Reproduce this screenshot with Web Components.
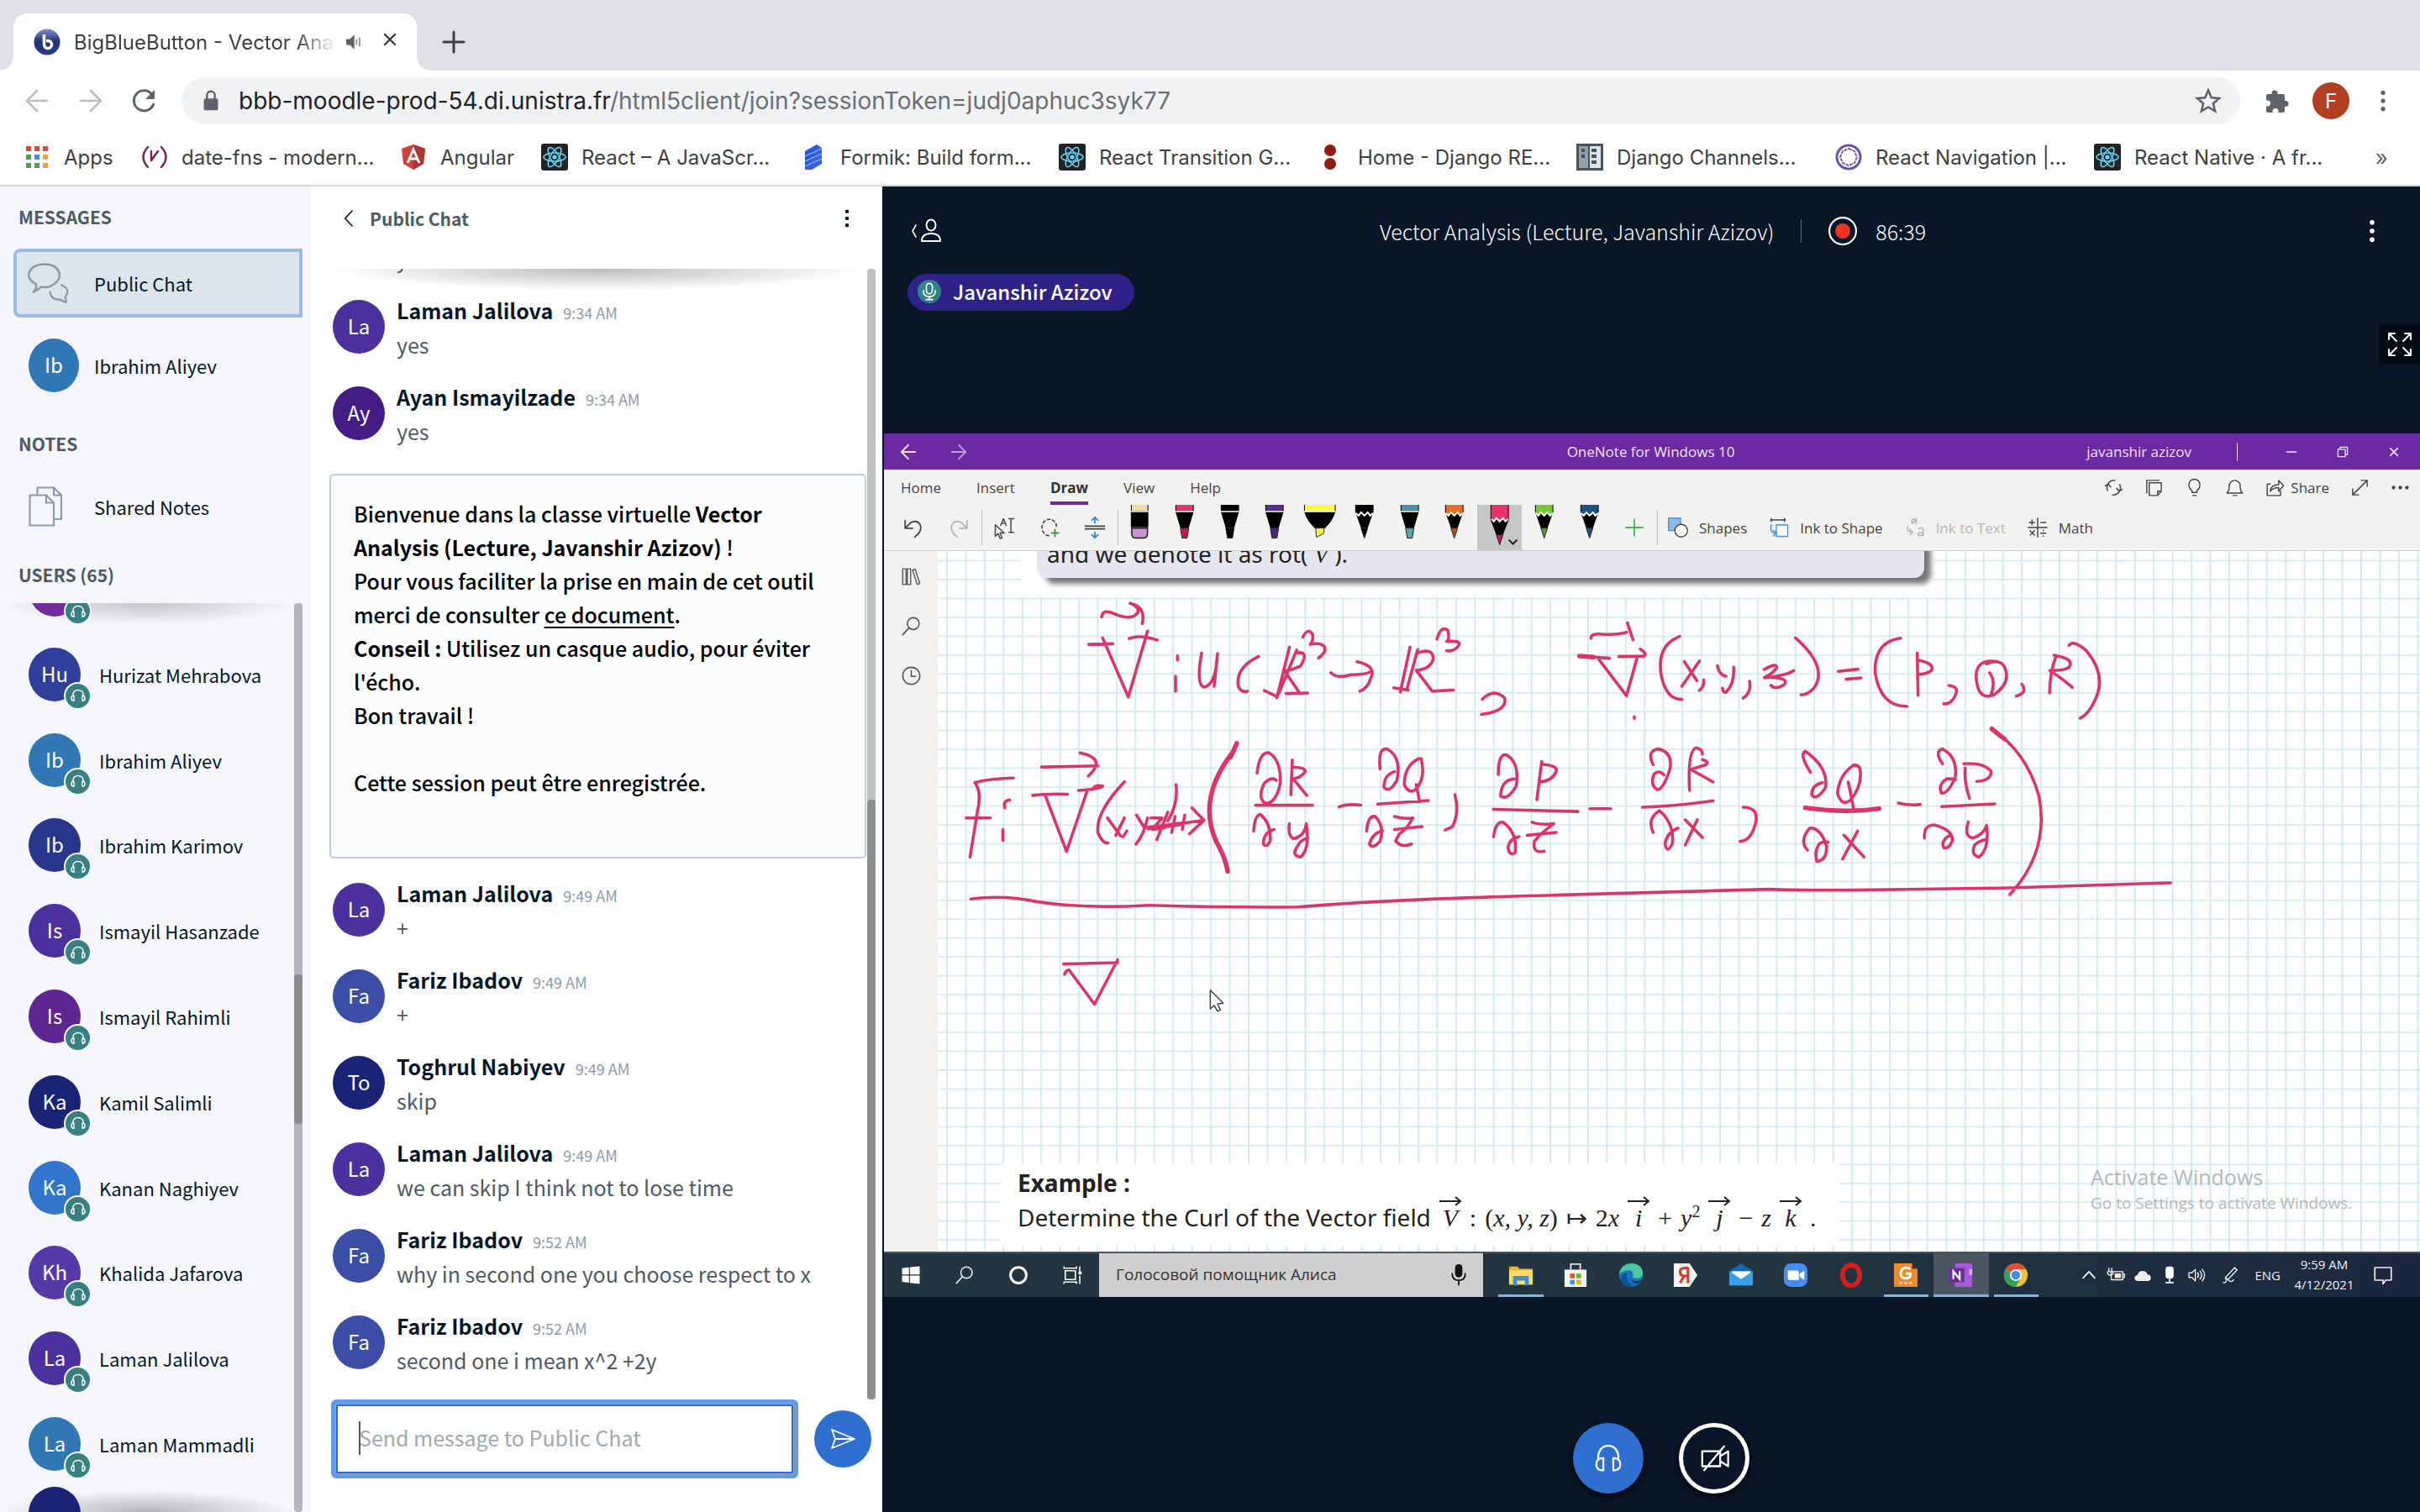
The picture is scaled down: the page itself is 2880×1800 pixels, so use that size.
<!DOCTYPE html>
<html lang="en">
<head>
<meta charset="utf-8">
<title>BigBlueButton - Vector Analysis</title>
<style>
html,body{margin:0;height:100%;overflow:hidden;background:#fff}
body{font-family:Inter,"Liberation Sans",sans-serif}
</style>
</head>
<body>
<meeting-page></meeting-page>
<script>
const define=(name,css,html)=>customElements.define(name,class extends HTMLElement{
  connectedCallback(){
    if(this.shadowRoot)return;
    const r=this.attachShadow({mode:'open'});
    const markup=typeof html==='function'?html(this):html;
    r.innerHTML='<style>*{box-sizing:border-box}button{font:inherit;color:inherit;background:none;border:0;padding:0;margin:0}a{color:inherit;text-decoration:none}'+css+'</style>'+markup;
  }
});
const S='fill="none" stroke="currentColor" stroke-linecap="round" stroke-linejoin="round"';
const react='<rect width="32" height="32" rx="3" fill="#222"/><g fill="none" stroke="#61dafb" stroke-width="1.5"><ellipse cx="16" cy="16" rx="13" ry="5"/><ellipse cx="16" cy="16" rx="13" ry="5" transform="rotate(60 16 16)"/><ellipse cx="16" cy="16" rx="13" ry="5" transform="rotate(120 16 16)"/></g><circle cx="16" cy="16" r="2.6" fill="#61dafb"/>';
const ICONS={
 bbb:'<defs><linearGradient id="g" x1="0" y1="0" x2="0" y2="1"><stop offset="0" stop-color="#7f8fc4"/><stop offset=".5" stop-color="#20307a"/><stop offset="1" stop-color="#2c3c88"/></linearGradient></defs><circle cx="16" cy="16" r="15.5" fill="url(#g)"/><path d="M12.500 7v12a4.500 4.500 0 1 0 4.500-4.500h-2" fill="none" stroke="#fff" stroke-width="3.600"/>',
 speaker:'<path d="M7 12h5l6-6v20l-6-6H7z" fill="#5f6368"/><path d="M21 12v8M25 10v12" stroke="#8a8d91" stroke-width="2"/>',
 close:`<path d="M9 9l14 14M23 9L9 23" ${S} stroke-width="2.6"/>`,
 plus:`<path d="M16 4v24M4 16h24" ${S} stroke-width="3"/>`,
 back:`<path d="M28 16H5M16 4L4 16l12 12" ${S} stroke-width="2.6"/>`,
 fwd:`<path d="M4 16h23M16 4l12 12-12 12" ${S} stroke-width="2.6"/>`,
 reload:`<path d="M27 19a12 12 0 1 1-2.500-11" fill="none" stroke="currentColor" stroke-width="3"/><path d="M28 3v11H17z" fill="currentColor"/>`,
 lock:'<rect x="7" y="13" width="18" height="15" rx="2" fill="#5f6368"/><path d="M11 14V9a5 5 0 0 1 10 0v5" fill="none" stroke="#5f6368" stroke-width="2.600"/>',
 star:'<path d="M16 3.500l3.700 8.700 9.300.8-7.100 6.200 2.200 9.200L16 23.500l-8.100 4.900 2.200-9.200L3 13l9.300-.8z" fill="none" stroke="#5f6368" stroke-width="2.600"/>',
 puzzle:'<path d="M13 3.500a3.500 3.500 0 0 1 3.500 3.500v1H23a2 2 0 0 1 2 2v6h1a3.500 3.500 0 0 1 0 7h-1v5a2 2 0 0 1-2 2h-5.500v-1.500a3.500 3.500 0 0 0-7 0V30H5a2 2 0 0 1-2-2v-5.500h1.500a3.500 3.500 0 0 0 0-7H3V10a2 2 0 0 1 2-2h4.500V7A3.500 3.500 0 0 1 13 3.500z" fill="#5f6368"/>',
 dots:'<circle cx="16" cy="5" r="3" fill="currentColor"/><circle cx="16" cy="16" r="3" fill="currentColor"/><circle cx="16" cy="27" r="3" fill="currentColor"/>',
 apps:'<g><path d="M3 3h6v6H3zM13 3h6v6h-6zM23 3h6v6h-6z" fill="#e0483e"/><path d="M3 13h6v6H3zM3 23h6v6H3zM13 23h6v6h-6z" fill="#4f9d58"/><path d="M13 13h6v6h-6z" fill="#4285f4"/><path d="M23 13h6v6h-6zM23 23h6v6h-6z" fill="#e8a33d"/></g>',
 datefns:'<path d="M8 4Q-3 16 8 28M24 4Q35 16 24 28M12 9v11M12 20L20 9" fill="none" stroke="#7a2158" stroke-width="2.400" stroke-linecap="round"/>',
 angular:'<path d="M16 1l14 5-2 18-12 7-12-7L2 6z" fill="#d0403b"/><path d="M16 1l14 5-2 18-12 7z" fill="#a93732"/><path d="M9 23l7-16 7 16M11.500 18h9" fill="none" stroke="#fff" stroke-width="2.800"/>',
 react,
 formik:'<path d="M6 9L20 1v21L6 31z" fill="#2357d8"/><path d="M20 1l6 4v19l-12 7-8 0z" fill="#2f63dd"/><path d="M6 15l20-9M6 21l20-9M6 27l20-9" stroke="#9db7f3" stroke-width="1.200"/>',
 drf:'<circle cx="15" cy="8" r="7" fill="#8f1d16"/><circle cx="15" cy="24" r="7" fill="#8f1d16"/>',
 channels:'<path d="M0 0h32v32H0z" fill="#47525b"/><path d="M3 3h11v26H3z" fill="#8fa1b0"/><path d="M16 3h13v26H16z" fill="#dfe4e8"/><path d="M6 6h4v4H6zM6 13h4v4H6zM18 6h6v4h-6zM18 13h6v4h-6zM18 20h6v4h-6z" fill="#47525b"/>',
 nav:'<circle cx="16" cy="16" r="14" fill="none" stroke="#6b52ae" stroke-width="3"/><path d="M16 6l7 3 3 7-3 7-7 3-7-3-3-7 3-7z" fill="none" stroke="#6b52ae" stroke-width="1.800" stroke-dasharray="4 1"/>',
 chats:`<path d="M6 17C-5 11 1 1 12.500 1S29 11 20 17Q16 20 10 19Q7 22 4 23Q6.500 20 6 17z" ${S} stroke-width="1.700"/><path d="M26 17.500Q34 21 29 27L30 31Q27 31 25.500 29Q18 30 17 23" ${S} stroke-width="1.500"/>`,
 notes:`<path d="M7 6V1h13l6 6v19h-6" ${S} stroke-width="1.400"/><path d="M1 7h13l6 6v18H1z" ${S} stroke-width="1.400"/><path d="M14 7v6h6M20 1v6h6" ${S} stroke-width="1.400"/>`,
 head:`<path d="M8 26H7q-4-1-4-5t4-5h1zM24 26h1q4-1 4-5t-4-5h-1zM6 16C5 2 27 2 26 16" ${S} stroke-width="2.200"/>`,
 headthin:`<path d="M11 28H9q-5-1-5-6t5-6h2zM21 28h2q5-1 5-6t-5-6h-2zM6 17C4-1 28-1 26 17" ${S} stroke-width="1.900"/>`,
 chev:`<path d="M20 4L9 16l11 12" ${S} stroke-width="2.200"/>`,
 send:`<path d="M3 5l27 11L3 27l4-11zM7 16h22" ${S} stroke-width="1.800"/>`,
 person:`<ellipse cx="21" cy="9" rx="5.500" ry="6.500" ${S} stroke-width="2"/><path d="M10 28q0-9 11-9t11 9z" ${S} stroke-width="2"/><path d="M3 9L-1 16l4 7" ${S} stroke-width="1.600"/>`,
 rec:'<circle cx="16" cy="16" r="15" fill="none" stroke="#fff" stroke-width="2"/><circle cx="16" cy="16" r="8.500" fill="#f03223"/>',
 mic:'<circle cx="16" cy="16" r="16" fill="#2f8285"/><g fill="none" stroke="#fff" stroke-width="1.800"><rect x="12" y="5" width="8" height="14" rx="4"/><path d="M8 14v2q0 7 8 7t8-7v-2M16 23v4M11 27h10"/></g>',
 full:`<path d="M3 10V3h7M3 3l9 9M22 3h7v7M29 3l-9 9M3 22v7h7M3 29l9-9M29 22v7h-7M29 29l-9-9" ${S} stroke-width="2"/>`,
 cam:`<path d="M4 9h18v15H4zM22 14l8-5v15l-8-5M6 28L26 4" ${S} stroke-width="1.900"/>`,
 min:`<path d="M7 16h18" ${S} stroke-width="2.400"/>`,
 restore:`<path d="M7 11h14v14H7zM11 11V7h14v14h-4" ${S} stroke-width="2.200"/>`,
 sync:`<path d="M6 21A12 12 0 0 1 18 4M26 11a12 12 0 0 1-12 17M2 13l5-3 4 5M30 19l-5 3-4-5" ${S} stroke-width="2"/>`,
 page:`<path d="M8 8h20v14l-6 7H8zM28 22h-6v7M4 25V4h20" ${S} stroke-width="2"/>`,
 bulb:`<path d="M12 24v-3q-6-5-5-10a9 9 0 0 1 18 0q1 5-5 10v3zM13 29h6" ${S} stroke-width="2"/>`,
 bell:`<path d="M3 25h26q-4-3-4-12a9 9 0 0 0-18 0q0 9-4 12zM13 29h6" ${S} stroke-width="2"/>`,
 share:`<path d="M8 10H3v19h22v-7M8 22q1-11 14-11V4l8 9-8 9v-6q-9 0-14 6z" ${S} stroke-width="2"/>`,
 diag:`<path d="M4 28L28 4M18 4h10v10M4 18v10h10" ${S} stroke-width="2"/>`,
 hdots:'<circle cx="5" cy="16" r="3" fill="currentColor"/><circle cx="16" cy="16" r="3" fill="currentColor"/><circle cx="27" cy="16" r="3" fill="currentColor"/>',
 undo:`<path d="M4 6v11h11M5 16L12 9q9-5 14 3 4 9-8 18" ${S} stroke-width="2.200"/>`,
 redo:`<path d="M28 6v11H17M27 16L20 9q-9-5-14 3-4 9 8 18" ${S} stroke-width="2.200"/>`,
 sel:`<path d="M3 12v17l4-4 3 7 3-1-3-7h6zM11 13l4-10 4 10M12 10h6M23 3h7M26 3v20M23 23h7" ${S} stroke-width="1.800"/>`,
 lasso:`<path d="M17 4A11 12 0 1 0 15 28" ${S} stroke-width="2" stroke-dasharray="4 4"/><path d="M20 5q6 3 6 9" ${S} stroke-width="2" stroke-dasharray="4 4"/><path d="M24 18v12M18 24h12" stroke="#3fa34d" stroke-width="2.400"/>`,
 space:`<path d="M1 14h30M1 18h30" stroke="#444" stroke-width="2"/><path d="M16 10V2M11 6l5-5 5 5M16 22v8M11 26l5 5 5-5" fill="none" stroke="#2c8cd6" stroke-width="2.200"/>`,
 gplus:'<path d="M16 3v26M3 16h26" stroke="#4fae5c" stroke-width="2.200"/>',
 shapes:'<path d="M1 1h19v20H1z" fill="#8cbdea" stroke="#3b77b5" stroke-width="1.500"/><circle cx="21" cy="21" r="10" fill="#fff" stroke="#444" stroke-width="1.800"/>',
 inkshape:'<path d="M2 4h25M4 1v6M25 1v6" stroke="#444" stroke-width="2" fill="none"/><path d="M12 12h18v18H12z" fill="#fff" stroke="#3f93dc" stroke-width="1.800"/><path d="M4 11q-3 14 7 14M7 20l5 5-5 5" fill="none" stroke="#3f93dc" stroke-width="2"/>',
 inktext:'<path d="M18 3q-7-2-7 4t6-3l1-1v8M5 14q-4 8 5 9M7 18l5 5-4 5M21 18q8-4 8 3v9m0-5q-8-2-8 2t8 0" fill="none" stroke="#b5b5b5" stroke-width="2.200"/>',
 math:`<path d="M16 1v30M1 16h30M7 4v8M3 8h8M21 8h8M4 21l7 7M11 21l-7 7M21 25h8M25 20v1M25 29v1" ${S} stroke-width="1.900"/>`,
 books:`<path d="M3 4h5v24H3zM10 4h5v24h-5zM18 6l4-1.500 7 22-4 1.500z" ${S} stroke-width="1.800"/>`,
 search:`<circle cx="19" cy="12" r="9" ${S} stroke-width="2"/><path d="M12 19L3 29" ${S} stroke-width="2.200"/>`,
 clock:`<circle cx="16" cy="16" r="13" ${S} stroke-width="2"/><path d="M16 8v9h7" ${S} stroke-width="2"/>`,
 win:'<path d="M2 5l11-1.500V15H2zM14.500 3.300L30 2v13H14.500zM2 16.500h11V28L2 26.500zM14.500 16.500H30V30l-15.500-1.700z" fill="#fff"/>',
 ring:'<circle cx="16" cy="16" r="12.500" fill="none" stroke="#fff" stroke-width="4"/>',
 task:'<path d="M5 9h16v14H5z" fill="none" stroke="#fff" stroke-width="2.200"/><path d="M3 2v3h20V2M3 30v-3h20v3M28 2v8M28 17v13" fill="none" stroke="#fff" stroke-width="2"/><path d="M26 10h5v5h-5z" fill="#fff"/>',
 micb:'<rect x="11" y="1" width="10" height="18" rx="5" fill="#111"/><path d="M7 13q0 10 9 10t9-10M16 23v7" fill="none" stroke="#111" stroke-width="2"/>',
 folder:'<path d="M1 5h11l2 3h17v20H1z" fill="#e8b53a"/><path d="M1 10h30v18H1z" fill="#fbd96b"/><path d="M6 17h20v12h-5v-6H11v6H6z" fill="#3d8fd1"/>',
 store:'<path d="M2 9h28v22H2z" fill="#f5f5f5"/><path d="M10 9V2h12v7" fill="none" stroke="#ddd" stroke-width="2"/><path d="M9 14h6v6H9z" fill="#e2502a"/><path d="M17 14h6v6h-6z" fill="#6fae2c"/><path d="M9 22h6v6H9z" fill="#2d9fdc"/><path d="M17 22h6v6h-6z" fill="#f2b01e"/>',
 edge:'<circle cx="16" cy="16" r="15" fill="#1673c0"/><path d="M1 16C2-4 31-3 31 13q0 8-10 7-4-1-2-5-1-6-8-5Q3 11 1 16z" fill="#4cc7a0"/><path d="M11 13q-3 12 9 17Q7 33 3 22q1-8 8-9z" fill="#0f4f96"/><path d="M29 22q-8 4-12-1 1 6 8 6 3-2 4-5z" fill="#21343f"/>',
 yandex:'<path d="M1 1h20l10 15-10 15H1z" fill="#f4f4f4"/><path d="M19 6v20M19 7h-4q-6 0-6 5t6 5h4M14 17L9 26" fill="none" stroke="#d9362c" stroke-width="3.200"/>',
 mail:'<path d="M1 11L16 1l15 10v18H1z" fill="#1467b3"/><path d="M4 11h24v12H4z" fill="#f4f8fb"/><path d="M1 11l15 10 15-10v18H1z" fill="#38a0e4"/>',
 zoom:'<rect x="1" y="1" width="30" height="30" rx="9" fill="#4a8cf0"/><path d="M6 10h12q2 0 2 2v10H8q-2 0-2-2zM21 14l6-4v12l-6-4z" fill="#fff"/>',
 opera:'<ellipse cx="16" cy="16" rx="11" ry="13" fill="none" stroke="#d3201f" stroke-width="6"/>',
 gpdf:'<path d="M1 1h23l7 7v23H1z" fill="#ec8a2c"/><path d="M24 1l7 7h-7z" fill="#4a2b0e"/><path d="M22 8q-9-4-12 3-2 10 8 9 4-1 4-6h-6" fill="none" stroke="#fff" stroke-width="3"/><path d="M8 26h16" stroke="#fbd9b0" stroke-width="3" stroke-dasharray="4 2"/>',
 onenote:'<path d="M8 1h22v30H8z" fill="#a55bd1"/><path d="M26 8h4v8h-4z" fill="#d9a7f0"/><path d="M1 7h19v18H1z" fill="#6b2aa2"/><path d="M6 21V11l8 10V11" fill="none" stroke="#fff" stroke-width="2.400"/>',
 chrome:'<circle cx="16" cy="16" r="15" fill="#f4c430"/><path d="M16 16L3 8.500A15 15 0 0 1 29 8.500H16z" fill="#dd4b3e"/><path d="M3 8.500A15 15 0 0 0 16 31l5.500-10L16 16z" fill="#36a057"/><circle cx="16" cy="16" r="7.500" fill="#fff"/><circle cx="16" cy="16" r="5.700" fill="#4a8af4"/>',
 up:`<path d="M6 21L16 10l10 11" ${S} stroke-width="2.600"/>`,
 batt:`<path d="M8 10h20v14H8zM28 14h3v6h-3M4 4v6M9 4v6M2 10h9v4q-5 4-9 0z" ${S} stroke-width="2"/><path d="M14 13h11v8H14z" fill="currentColor"/>`,
 cloud:'<path d="M7 26q-6-1-5-6 1-4 5-4 2-8 10-7 6 0 7 6 6 0 6 6 0 4-4 5z" fill="#eee"/>',
 micw:'<rect x="9" y="1" width="14" height="21" rx="5" fill="#fff"/><path d="M16 22v6M9 29h14" stroke="#fff" stroke-width="2.400"/>',
 vol:`<path d="M3 12h5l6-6v20l-6-6H3zM18 12q3 4 0 8M22 9q6 7 0 14M26 6q8 10 0 20" ${S} stroke-width="2"/>`,
 pen:`<path d="M8 20L24 3l4 4-16 17zM4 29q8 1 4-8M12 24q6 6 10 0" ${S} stroke-width="2"/>`,
 note:`<path d="M3 4h26v20h-9l-4 6v-6H3z" ${S} stroke-width="2.200"/>`
};
define('ui-icon',':host{display:inline-flex;width:32px;height:32px;flex:none}svg{width:100%;height:100%;display:block;overflow:visible}',
 e=>`<svg viewBox="0 0 32 32" aria-hidden="true">${ICONS[e.getAttribute('name')]||''}</svg>`);

/* ---------- browser frame ---------- */
define('browser-tabs',`:host{display:flex;height:84px;background:#dee0e4;padding:16px 0 0 16px;color:#3c4043;font-size:24px;align-items:stretch}
.tab{position:relative;display:flex;align-items:center;width:480px;padding:0 18px 0 24px;background:#fff;border-radius:16px 16px 0 0}
.tab:before,.tab:after{content:"";position:absolute;bottom:0;width:16px;height:16px;left:-16px;background:radial-gradient(circle at 0 0,transparent 15px,#fff 16px)}
.tab:after{left:auto;right:-16px;background:radial-gradient(circle at 100% 0,transparent 15px,#fff 16px)}
.t{flex:1;margin-left:16px;white-space:nowrap;-webkit-mask:linear-gradient(90deg,#000 85%,transparent)}
.s{width:28px;height:28px;margin:0 16px 0 6px}.c{width:28px;height:28px}.n{display:flex;margin:18px 0 0 28px}.n ui-icon{width:32px;height:32px}`,
`<div class="tab"><ui-icon name="bbb"></ui-icon><span class="t">BigBlueButton - Vector Ana</span><ui-icon class="s" name="speaker"></ui-icon><button aria-label="Close tab"><ui-icon class="c" name="close"></ui-icon></button></div><button class="n" aria-label="New tab"><ui-icon name="plus"></ui-icon></button>`);
define('browser-bar',`:host{display:flex;height:72px;align-items:center;padding:0 30px 0 28px;color:#5f6368;background:#fff}
button{display:flex}.nav{display:flex;gap:32px;width:188px}.off{color:#babcbe}
.url{flex:1;display:flex;align-items:center;height:56px;border-radius:28px;background:#f1f2f4;padding:0 22px 0 20px}
.lock{width:30px;height:30px;margin-right:18px}.addr{flex:1;font-size:28px;white-space:nowrap;color:#6b6f73}.addr b{font-weight:400;color:#202124}
.right{display:flex;align-items:center;gap:26px;margin-left:28px}.av{width:44px;height:44px;border-radius:50%;background:#b23f21;color:#fff;font-size:24px;align-items:center;justify-content:center}
.m{width:28px;height:28px}`,
`<div class="nav"><button class="off" aria-label="Back"><ui-icon name="back"></ui-icon></button><button class="off" aria-label="Forward"><ui-icon name="fwd"></ui-icon></button><button aria-label="Reload"><ui-icon name="reload"></ui-icon></button></div>
<div class="url"><ui-icon class="lock" name="lock"></ui-icon><span class="addr"><b>bbb-moodle-prod-54.di.unistra.fr</b>/html5client/join?sessionToken=judj0aphuc3syk77</span><button aria-label="Bookmark"><ui-icon name="star"></ui-icon></button></div>
<div class="right"><button aria-label="Extensions"><ui-icon name="puzzle"></ui-icon></button><button class="av">F</button><button aria-label="Menu"><ui-icon class="m" name="dots"></ui-icon></button></div>`);
define('bookmark-link',`:host{display:block}a{display:flex;align-items:center;gap:16px;font-size:24px;color:#3c4043;white-space:nowrap}span{width:var(--w,228px)}`,
e=>`<a href="#"><ui-icon name="${e.getAttribute('icon')}"></ui-icon><span><slot></slot></span></a>`);
define('bookmark-bar',`:host{display:flex;height:66px;align-items:center;gap:32px;padding:0 38px 2px 28px;border-bottom:2px solid #d8d9dd;background:#fff}.s{--w:60px}.m{--w:88px}button{margin-left:auto;font-size:26px;color:#5f6368}`,
`<bookmark-link class="s" icon="apps">Apps</bookmark-link><bookmark-link icon="datefns">date-fns - modern...</bookmark-link><bookmark-link class="m" icon="angular">Angular</bookmark-link><bookmark-link icon="react">React – A JavaScr...</bookmark-link><bookmark-link icon="formik">Formik: Build form...</bookmark-link><bookmark-link icon="react">React Transition G...</bookmark-link><bookmark-link icon="drf">Home - Django RE...</bookmark-link><bookmark-link icon="channels">Django Channels...</bookmark-link><bookmark-link icon="nav">React Navigation |...</bookmark-link><bookmark-link icon="react">React Native · A fr...</bookmark-link><button>»</button>`);

/* ---------- user list ---------- */
define('user-avatar',`:host{display:flex;position:relative;flex:none;width:62px;height:64px;border-radius:50%;background:var(--c);color:#fff;font-size:24px;line-height:62px;justify-content:center}
i{position:absolute;left:42px;top:41px;width:33px;height:33px;border-radius:50%;background:#3a8080;border:2px solid #f4f6fa;display:flex;align-items:center;justify-content:center;color:#fff}i ui-icon{width:20px;height:20px}`,
e=>`<slot></slot>${e.hasAttribute('audio')?'<i><ui-icon name="head"></ui-icon></i>':''}`);
define('user-row',`:host{display:flex;align-items:center;gap:22px;padding-left:34px;font-size:22px;color:#06172a}`,
e=>`<user-avatar audio style="--c:${e.getAttribute('color')}">${e.getAttribute('short')}</user-avatar><slot></slot>`);
define('user-panel',`:host{display:flex;flex-direction:column;width:370px;background:#f4f6fa;color:#06172a;font-size:22px}
h2{margin:22px 0 18px;padding-left:22px;font-size:21px;line-height:32px;font-weight:700;color:#4e5a66}h2:first-of-type{margin:20px 0 22px}h2:last-of-type{margin:24px 0 18px}
.item{display:flex;align-items:center;height:82px;width:344px;margin-left:16px;padding-left:14px;text-align:left;border:4px solid transparent}
.item+.item{margin:16px 0 14px 16px}
.on{border-color:#9bbbe6;background:#dce4ec;border-radius:8px 0 0 8px}
.item ui-icon{width:48px;height:48px;color:#8b9aaa}.item span{margin-left:30px}.item user-avatar{width:60px}.item user-avatar+span{margin-left:18px}
.list{position:relative;flex:1;min-height:0;width:360px;display:flex;flex-direction:column;overflow:hidden;background:radial-gradient(farthest-side at 50% 0,#0003,#0000) top left/350px 26px no-repeat,radial-gradient(farthest-side at 50% 100%,#0004,#0000) bottom left/350px 26px no-repeat}
user-row{flex:1}.first{flex:none;height:34px;align-items:flex-end;padding-bottom:18px}.last{flex:none;height:30px;align-items:flex-start}
.bar{position:absolute;right:0;top:0;bottom:0;width:10px;border-radius:4px;background:#b5b6b9}.bar:after{content:"";display:block;height:178px;margin-top:442px;border-radius:4px;background:#8b8c8e}`,
`<h2>MESSAGES</h2>
<button class="item on"><ui-icon name="chats"></ui-icon><span>Public Chat</span></button>
<button class="item"><user-avatar style="--c:#3077b6">Ib</user-avatar><span>Ibrahim Aliyev</span></button>
<h2>NOTES</h2>
<button class="item"><ui-icon name="notes"></ui-icon><span>Shared Notes</span></button>
<h2>USERS (65)</h2>
<div class="list"><user-row class="first" color="#732ba0" short=""></user-row>
<user-row color="#30409a" short="Hu">Hurizat Mehrabova</user-row><user-row color="#3077b6" short="Ib">Ibrahim Aliyev</user-row><user-row color="#28368c" short="Ib">Ibrahim Karimov</user-row><user-row color="#4b319e" short="Is">Ismayil Hasanzade</user-row><user-row color="#5f2590" short="Is">Ismayil Rahimli</user-row><user-row color="#1a2476" short="Ka">Kamil Salimli</user-row><user-row color="#3375cb" short="Ka">Kanan Naghiyev</user-row><user-row color="#563aa8" short="Kh">Khalida Jafarova</user-row><user-row color="#4b319e" short="La">Laman Jalilova</user-row><user-row color="#3077b6" short="La">Laman Mammadli</user-row>
<user-row class="last" color="#1a2476" short=""></user-row><div class="bar"></div></div>`);

/* ---------- chat ---------- */
define('chat-message',`:host{display:flex;height:80px;gap:14px;color:#4e5a66;font-size:25px}
b{color:#06172a;font-weight:700}time{font-size:18px;color:#8b9aaa;margin-left:12px}.h{line-height:24px;white-space:nowrap;height:33px}p{margin:0;line-height:40px;white-space:nowrap}`,
e=>`<user-avatar style="--c:${e.getAttribute('color')}">${e.getAttribute('name').slice(0,2)}</user-avatar><div><div class="h"><b>${e.getAttribute('name')}</b><time>${e.getAttribute('time')}</time></div><p><slot></slot></p></div>`);
define('chat-panel',`:host{display:flex;flex-direction:column;width:680px;background:#fff;color:#4e5a66}
header{display:flex;align-items:center;height:76px;padding:0 30px 0 34px;font-size:21px;font-weight:700}header ui-icon{width:24px;height:24px;color:#06172a}header button{display:flex;align-items:center;gap:12px}header button:last-child{margin-left:auto}
.view{position:relative;margin-top:22px;width:672px;flex:1;overflow:hidden;background:radial-gradient(farthest-side at 50% 0,#0004,#0000) 22px 0/640px 26px no-repeat}
.log{display:flex;flex-direction:column;gap:23px;margin:-32px 0 0 26px}.prev{margin:0 0 6px 76px;font-size:25px;line-height:40px}
.note{width:639px;margin:1px 0 6px -4px;padding:25px 27px 29px;border:2px solid #c4cdd4;border-radius:5px;background:#fafbfd;color:#000;font-size:25px;line-height:40px;font-weight:500;white-space:nowrap}.note b{font-weight:700}.note a{text-decoration:underline;text-underline-offset:4px;text-decoration-thickness:2px}
.bar{position:absolute;right:0;top:0;bottom:0;width:10px;border-radius:4px;background:#bfbfbf;padding-top:632px}.bar:after{content:"";display:block;height:100%;border-radius:4px;background:#8f8f8f}
form{display:flex;align-items:center;gap:20px;padding:0 13px 40px 26px}
input{flex:1;min-width:0;height:82px;margin:0 0 0 4px;border:2px solid #2c6bd0;border-radius:2px;outline:0;box-shadow:0 0 0 1px #9aa6b4,0 0 0 6px #629be8;padding:0 26px 4px 25px;font:inherit;font-size:25px}
input::placeholder{color:#a0a8b0;opacity:1}
.field{position:relative;display:flex;flex:1;padding:6px 5px 6px 0}.field:after{content:"";position:absolute;left:31px;top:26px;width:2px;height:40px;background:#4e5a66}
.send{width:68px;height:68px;border-radius:50%;background:#2f6fd0;color:#fff;display:flex;align-items:center;justify-content:center}`,
`<header><button><ui-icon name="chev"></ui-icon>Public Chat</button><button aria-label="Options"><ui-icon name="dots"></ui-icon></button></header>
<div class="view"><div class="log">
<p class="prev">yes</p>
<chat-message name="Laman Jalilova" color="#4b319e" time="9:34 AM">yes</chat-message>
<chat-message name="Ayan Ismayilzade" color="#431d85" time="9:34 AM">yes</chat-message>
<div class="note">Bienvenue dans la classe virtuelle <b>Vector<br>Analysis (Lecture, Javanshir Azizov)</b> !<br>Pour vous faciliter la prise en main de cet outil<br>merci de consulter <a href="#">ce document</a>.<br><b>Conseil :</b> Utilisez un casque audio, pour éviter<br>l'écho.<br>Bon travail !<br><br>Cette session peut être enregistrée.<br><br></div>
<chat-message name="Laman Jalilova" color="#4b319e" time="9:49 AM">+</chat-message>
<chat-message name="Fariz Ibadov" color="#3c4da6" time="9:49 AM">+</chat-message>
<chat-message name="Toghrul Nabiyev" color="#1a2476" time="9:49 AM">skip</chat-message>
<chat-message name="Laman Jalilova" color="#4b319e" time="9:49 AM">we can skip I think not to lose time</chat-message>
<chat-message name="Fariz Ibadov" color="#3c4da6" time="9:52 AM">why in second one you choose respect to x</chat-message>
<chat-message name="Fariz Ibadov" color="#3c4da6" time="9:52 AM">second one i mean x^2 +2y</chat-message>
</div><div class="bar"></div></div>
<form><div class="field"><input aria-label="Send message to Public Chat" placeholder="Send message to Public Chat"></div><button class="send" type="button" aria-label="Send"><ui-icon name="send"></ui-icon></button></form>`);

/* ---------- shared screen ---------- */
const pen=(top,tip,kind)=>{
 if(kind==='eraser')return `<path d="M16 0h21v27H16z" fill="#000"/><path d="M17 0h19v7H17z" fill="#f2dca0"/><path d="M16 8h21" stroke="#fff" stroke-width="1.500"/><path d="M17 28h19v6q0 6-5 6h-9q-5 0-5-6z" fill="#c792d2" stroke="#222" stroke-width="1.500"/>`;
 if(kind==='marker')return `<path d="M8 0h38v8q-4 12-12 19v1H20v-1Q12 20 8 8z" fill="#000"/><path d="M9 0h36v8H9z" fill="#fbf83f"/><path d="M8 8h38" stroke="#fff" stroke-width="1.500"/><path d="M22 28h10v6l-9 5z" fill="#fbf83f" stroke="#222"/>`;
 if(kind==='pencil')return `<path d="M16 0h22v8l-7 20h-8L16 8z" fill="#000"/><path d="M17 0h20v10l-3 3-3-4-4 4-4-4-3 4-3-3z" fill="${top}"/><path d="M17 10l3 3 3-4 4 4 4-4 3 4 3-3" fill="none" stroke="#fff" stroke-width="2"/><path d="M23 28h8l-4 12z" fill="${tip}" stroke="#222"/>`;
 return `<path d="M16 0h22v8l-6 20H22L16 8z" fill="#000"/><path d="M17 0h20v7H17z" fill="${top}"/><path d="M16 8h22" stroke="#fff" stroke-width="1.500"/><path d="M22 28h10l-2 12h-6z" fill="${tip}" stroke="#222"/>`;};
define('pen-tool',`:host{flex:1;min-width:0;display:block;height:54px}:host([selected]){background:#c6c6c6}button{display:block;width:100%;height:100%}svg{display:block;width:100%;height:54px}`,
e=>`<button aria-label="Pen"><svg viewBox="0 0 54 54" preserveAspectRatio="xMidYMin">${e.hasAttribute('selected')?`<path d="M16 0h22v18l-7 18h-8L16 18z" fill="#000"/><path d="M17 0h20v18l-3 2-3-4-4 4-4-4-3 4-3-2z" fill="#e8326c"/><path d="M17 17l3 3 3-4 4 4 4-4 3 4 3-3" fill="none" stroke="#fff" stroke-width="2"/><path d="M23 36h8l-4 12z" fill="#c2185b" stroke="#222"/><path d="M38 42l5 5 5-5" fill="none" stroke="#222" stroke-width="2"/>`:pen(e.getAttribute('top'),e.getAttribute('tip'),e.getAttribute('kind'))}</svg></button>`);
define('note-ribbon',`:host{display:block;font-family:"Open Sans","Noto Sans",sans-serif;background:#f2f2f1;color:#444;font-size:17px}
button{display:flex;align-items:center}
.title{display:grid;grid-template-columns:1fr auto 1fr;align-items:center;height:43px;background:#6b2aa2;color:#f0e6f7;padding:0 21px 0 18px}
.title div{display:flex;align-items:center}.l{gap:38px}.l ui-icon{width:22px;height:22px}.l button:last-child{opacity:.6}.r{justify-content:flex-end}.r ui-icon{width:20px;height:20px}.r button{margin-left:41px}.r i{width:1px;height:22px;background:#e5d5f0;margin-left:54px}.r i+button{margin-left:54px}
.tabs{display:flex;align-items:stretch;height:42px;padding:0 12px 0 20px;gap:42px}.tabs .on{font-weight:700;color:#333;border-bottom:4px solid #6b2aa2;border-top:4px solid transparent}
.acts{display:flex;margin-left:auto;align-items:center;gap:25px}.acts ui-icon{width:23px;height:23px}.acts .sh{gap:7px}
.tools{display:flex;height:55px;align-items:center;border-bottom:1px solid #cfcfcf;padding-left:8px}
.slot{width:54px;justify-content:center}.slot ui-icon{width:26px;height:26px}.tools i{width:1px;height:42px;background:#bbb;margin-right:-1px}.pens{display:flex;width:588px;height:54px}
.cmd{gap:13px;padding:0 13px;white-space:nowrap}.cmd ui-icon{width:24px;height:24px}.dim{color:#b5b5b5}`,
`<div class="title"><div class="l"><button aria-label="Back"><ui-icon name="back"></ui-icon></button><button aria-label="Forward"><ui-icon name="fwd"></ui-icon></button></div><span>OneNote for Windows 10</span><div class="r"><span>javanshir azizov</span><i></i><button aria-label="Minimise"><ui-icon name="min"></ui-icon></button><button aria-label="Restore"><ui-icon name="restore"></ui-icon></button><button aria-label="Close"><ui-icon name="close"></ui-icon></button></div></div>
<div class="tabs"><button>Home</button><button>Insert</button><button class="on">Draw</button><button>View</button><button>Help</button><div class="acts"><ui-icon name="sync"></ui-icon><ui-icon name="page"></ui-icon><ui-icon name="bulb"></ui-icon><ui-icon name="bell"></ui-icon><button class="sh"><ui-icon name="share"></ui-icon>Share</button><ui-icon name="diag"></ui-icon><ui-icon name="hdots"></ui-icon></div></div>
<div class="tools"><button class="slot" aria-label="Undo"><ui-icon name="undo"></ui-icon></button><button class="slot dim" aria-label="Redo"><ui-icon name="redo"></ui-icon></button><i></i><button class="slot" aria-label="Select"><ui-icon name="sel"></ui-icon></button><button class="slot" aria-label="Lasso"><ui-icon name="lasso"></ui-icon></button><button class="slot" aria-label="Insert space"><ui-icon name="space"></ui-icon></button><i></i>
<div class="pens"><pen-tool kind="eraser"></pen-tool><pen-tool top="#e8326c" tip="#c2185b"></pen-tool><pen-tool top="#000" tip="#000"></pen-tool><pen-tool top="#5b2d91" tip="#4a2580"></pen-tool><pen-tool kind="marker"></pen-tool><pen-tool kind="pencil" top="#000" tip="#000"></pen-tool><pen-tool top="#4b8fa8" tip="#56a5a8"></pen-tool><pen-tool kind="pencil" top="#e86f24" tip="#b5521a"></pen-tool><pen-tool selected></pen-tool><pen-tool kind="pencil" top="#76c832" tip="#5a9a22"></pen-tool><pen-tool kind="pencil" top="#1c4f86" tip="#1c4f86"></pen-tool></div>
<button class="slot" aria-label="Add pen"><ui-icon name="gplus"></ui-icon></button><i></i><button class="cmd"><ui-icon name="shapes"></ui-icon>Shapes</button><button class="cmd"><ui-icon name="inkshape"></ui-icon>Ink to Shape</button><button class="cmd dim"><ui-icon name="inktext"></ui-icon>Ink to Text</button><button class="cmd"><ui-icon name="math"></ui-icon>Math</button></div>`);

const inkLeft=`M333,155Q335,125 360,145Q395,170 408,140Q412,120 392,108Q425,120 417,178M306,250L356,248M335,228L388,432L428,204M390,230Q410,215 448,235M490,290v14M486,360V412M540,280Q528,390 545,398Q570,390 573,282L566,395M658,292Q610,330 616,395Q622,418 635,412M722,260L696,435M737,270L700,420M735,280Q765,270 745,325Q725,340 712,342L742,415M670,410L696,430M715,420L760,418M750,225Q760,190 770,215Q772,240 765,250Q800,240 795,275Q790,290 782,297M808,348Q820,370 850,355Q880,355 890,345M862,310Q905,325 890,370Q885,400 868,412M972,260L952,415M988,268L965,408M988,280Q1020,260 1020,300Q1015,335 985,340L1018,412L1062,408M938,400L968,408M1028,232Q1035,185 1050,200Q1055,235 1048,240Q1085,235 1070,260Q1060,275 1048,272M1122,440Q1145,400 1168,435Q1175,480 1120,492M1437,500v6
M150,712Q95,715 70,728Q85,760 75,830L60,985M52,850H102M142,788Q128,790 132,815M128,890v38M208,674L325,670M288,625Q345,645 305,705M190,772Q220,765 262,768M215,768L260,966L303,755M285,755Q330,750 335,740Q320,735 315,748M380,725Q320,830 325,900Q335,940 346,936M345,850L372,912M380,850L362,910M385,895l-8,20M405,840L420,880M428,850Q420,910 404,940M435,850L458,850L438,890L462,885M470,830L447,925M485,845L478,900M505,840L500,890M487,735Q492,800 470,860M430,885L545,858M520,815L545,858L515,905M655,695Q660,620 680,625Q705,650 703,730Q695,800 672,800Q655,780 670,730Q685,705 695,720M728,650L725,770M732,675Q755,675 755,690Q745,712 730,715L758,772M652,806H770M648,895Q650,840 662,838Q685,870 682,930Q675,955 668,940Q668,900 690,890M722,870Q718,915 732,922Q755,910 757,870Q765,960 745,985Q725,980 738,950Q745,925 760,920M825,812Q840,800 870,806M910,680Q905,605 925,612Q955,640 945,720Q930,765 918,745Q918,700 940,690M990,645Q960,670 960,735Q970,770 985,750Q1005,710 995,645M985,735L992,795M905,802L1010,790M882,895Q885,840 900,845Q920,880 910,930Q895,960 888,940Q895,900 915,895M940,845Q960,855 978,850Q965,890 950,905L942,930Q955,955 975,940M940,890L997,880M1065,770Q1075,830 1060,880L1045,892M1155,700Q1155,625 1172,632Q1200,660 1192,740Q1175,790 1160,775Q1160,720 1188,715M1245,655L1235,787M1248,665Q1280,670 1275,690Q1265,725 1240,725M1145,820L1320,828M1145,915Q1150,860 1165,865Q1195,900 1190,970Q1178,985 1175,950Q1180,920 1198,915M1225,865Q1240,875 1270,870Q1245,900 1230,930Q1225,975 1250,965M1215,910L1275,900M1345,818H1388M62,1130Q130,1115 200,1140Q300,1165 430,1152Q600,1160 740,1158Q900,1135 1200,1120L1275,1117M254,1355L366,1350M366,1340L318,1494L265,1375Q258,1378 256,1390`;
const inkRight=`M85,237Q85,218 110,222Q150,225 168,215M170,182L183,242M58,300L128,308M150,302L210,300M200,275Q220,295 205,302M100,305L168,442L192,310M292,230Q240,260 248,360Q258,455 297,455M303,320L332,388M338,318L297,408M348,385Q350,410 338,422M380,335Q385,370 400,372M418,340Q420,400 400,430Q392,430 392,415M455,390Q460,430 440,450M489,348Q520,322 518,342Q510,362 490,376Q550,375 536,402Q515,422 505,405M490,378Q540,370 558,352M562,235Q640,340 605,415Q590,440 575,438M662,355L708,347M680,383L715,378M807,236Q745,250 748,360Q760,480 822,480M846,290L848,440M848,315Q885,325 880,350Q870,365 850,365M920,405Q945,410 935,440Q925,475 908,470M1032,320Q975,308 985,395Q992,460 1025,438Q1066,395 1050,340Q1040,308 1008,328M1015,360Q1030,390 1018,440M1090,400Q1105,430 1077,443M1170,300Q1155,360 1155,432M1165,297Q1215,310 1200,340Q1190,352 1155,352Q1175,370 1208,412M1200,262Q1210,240 1240,280Q1290,370 1260,460Q1245,510 1226,522
M230,688Q215,640 240,632Q275,640 270,700Q255,775 240,778Q222,760 232,722Q245,705 255,725M315,780Q310,640 330,628Q345,632 345,650M345,670Q365,680 350,690L318,705L370,750M205,840Q290,835 370,817M230,930Q215,880 245,852Q280,900 275,970Q262,1010 258,970Q262,930 288,915M305,885L345,948M333,885L305,975M440,840Q475,840 470,890Q460,960 433,962M597,715Q570,650 585,640Q640,700 632,770Q610,820 600,795Q600,760 625,752M700,688Q665,720 660,790Q670,840 690,815Q720,760 712,700Q705,685 695,692M685,750Q690,780 698,850M585,842Q680,865 757,845M590,993Q570,960 595,915Q620,910 635,980Q635,1030 612,1034Q605,1000 618,970Q630,960 638,965M675,940L722,1018M707,925L672,1025M802,825Q830,835 853,830M905,685Q885,640 905,632Q940,660 935,730Q920,790 903,790Q893,760 915,738Q928,738 935,742M958,700Q955,750 968,808M955,685Q1000,680 1018,710Q1020,745 985,748M903,838L1027,828M863,950Q860,905 885,903Q930,920 928,960Q920,990 908,985Q900,960 922,940M965,893Q955,945 975,950Q1000,940 1008,905Q1015,990 990,1018Q970,1010 980,975Q990,960 1008,955M1020,562Q1100,640 1130,800Q1155,1000 1062,1152M0,1154Q300,1140 500,1133Q560,1137 700,1136L1060,1128L1437,1110`;
define('note-canvas',`:host{position:relative;display:block;flex:1;min-width:0;overflow:hidden;background:#fefefe;font-family:"Noto Sans","Open Sans",sans-serif;color:#222}
svg.bg{position:absolute;left:0;top:0;width:100%;height:100%}
.ink path{fill:none;stroke:#dc3468;stroke-width:3.6px;stroke-linecap:round;stroke-linejoin:round;vector-effect:non-scaling-stroke}.ink .w{stroke-width:5.5px}
.def,.ex,.wm{position:absolute;white-space:nowrap}
.patch{position:absolute;left:99px;top:0;width:1086px;height:55px;background:#fff}
.def{left:118px;top:-30px;width:1056px;height:62px;border-radius:12px;background:#e6e6f0;box-shadow:9px 8px 6px -1px #777;padding:13px 12px;font-size:28px;line-height:40px}.def em{font-family:"Liberation Serif",serif}
.ex{left:75px;top:729px;width:998px;height:98px;background:#fff;padding:7px 20px;font-size:28px}.ex b,.ex p{display:block;margin:0;line-height:32px;height:32px;font-weight:700}.ex p{display:flex;gap:10px;align-items:baseline;font-weight:400;line-height:50px}
.ex em,.ex s{font-family:"Liberation Serif",serif;font-size:30px;text-decoration:none;font-style:italic}.ex s{font-style:normal}sup{font-size:20px;font-style:normal;line-height:0}
.v{position:relative;min-width:26px;text-align:center}.v svg{position:absolute;left:0;top:1px;width:26px;height:10px;overflow:visible}
.wm{left:1372px;top:727px;color:#b4b8bb;font-family:"Open Sans",sans-serif;font-size:25px;line-height:36px}.wm small{display:block;font-size:19px;line-height:26px}`,
e=>{const v=t=>`<span class="v"><em>${t}</em><svg viewBox="0 0 26 10"><path d="M0 5h24M19 0l6 5-6 5" fill="none" stroke="#222" stroke-width="2"/></svg></span>`;
return `<svg class="bg" viewBox="0 0 1764 835" preserveAspectRatio="xMinYMin slice"><defs><pattern id="p" x="10" y="33" width="22.440" height="22.460" patternUnits="userSpaceOnUse"><path d="M0 1H23M1 0V23" stroke="#cbe8ef" stroke-width="1.600"/></pattern></defs><rect width="3000" height="1400" fill="url(#p)"/></svg>
<div class="patch"></div><div class="def">and we denote it as rot( <em>V</em> ).</div>
<div class="ex"><b>Example :</b><p><span>Determine the Curl of the Vector field</span>${v('V')}<s>:</s><s>(<em>x, y, z</em>)</s><s>↦</s><s>2<em>x</em></s>${v('i')}<s>+</s><em>y<sup>2</sup></em>${v('j')}<s>−</s><em>z</em>${v('k')}<s>.</s></p></div>
<svg class="bg ink" viewBox="0 0 1764 835" preserveAspectRatio="xMinYMin slice"><g transform="translate(4 25) scale(.5741 .3444)"><path d="${inkLeft}"/><path class="w" d="M606,620Q530,780 570,930Q590,990 594,1035M613,592L600,640M430,885L500,870"/><path d="M558,1445V1510L566,1498L573,1518L579,1514L573,1493L585,1490Z" style="fill:#fff;stroke:#444;stroke-width:1.500px"/></g><g transform="translate(734 25) scale(.5102 .3333)"><path d="${inkRight}"/><path class="w" d="M1020,560Q1035,580 1050,596M585,842Q680,862 757,845M58,300L90,304"/></g></svg>
<div class="wm">Activate Windows<small>Go to Settings to activate Windows.</small></div>`});
define('note-body',`:host{display:flex;flex:1;min-height:0}nav{display:flex;flex-direction:column;align-items:center;width:64px;padding-top:18px;gap:34px;background:#f2f1f0;color:#555}nav ui-icon{width:25px;height:25px}`,
`<nav><ui-icon name="books"></ui-icon><ui-icon name="search"></ui-icon><ui-icon name="clock"></ui-icon></nav><note-canvas></note-canvas>`);
define('win-taskbar',`:host{display:flex;height:54px;align-items:stretch;background:linear-gradient(90deg,#21343f 60%,#1b2840);color:#eee;font-family:"Open Sans","Noto Sans",sans-serif;font-size:15px;border-top:2px solid #4b5660}
button,span{display:flex;align-items:center;justify-content:center}.k{width:64px}.k ui-icon{width:24px;height:24px}
.find{display:flex;align-items:center;width:457px;background:#cfcfcf;padding:0 15px 0 20px}input{flex:1;min-width:0;border:0;background:none;padding:0 0 2px;font:inherit;font-size:19px;color:#333;outline:0}input::placeholder{color:#333;opacity:1}.find ui-icon{width:28px;height:28px}
.apps{display:flex;margin-left:12px;width:655px}.apps button{flex:1;position:relative}.apps ui-icon{width:30px;height:30px}.open:after{content:"";position:absolute;left:6px;right:6px;bottom:0;height:3px;background:#76b9ed}.act{background:#4a5561}.act:after{left:0;right:0}
.tray{display:flex;margin-left:auto;align-items:center}.tray ui-icon{width:22px;height:22px;margin-right:10px}.tray .pen{margin:0 18px 0 8px}.time{flex-direction:column;line-height:24px;width:76px;margin:0 20px 2px 14px}.tray .n{margin-right:32px;width:24px;height:24px}`,
`<button class="k" aria-label="Start"><ui-icon name="win"></ui-icon></button><button class="k" aria-label="Search"><ui-icon name="search"></ui-icon></button><button class="k" aria-label="Cortana"><ui-icon name="ring"></ui-icon></button><button class="k" aria-label="Task view"><ui-icon name="task"></ui-icon></button>
<div class="find"><input aria-label="Голосовой помощник Алиса" placeholder="Голосовой помощник Алиса"><ui-icon name="micb"></ui-icon></div>
<div class="apps"><button class="open" aria-label="Explorer"><ui-icon name="folder"></ui-icon></button><button aria-label="Store"><ui-icon name="store"></ui-icon></button><button aria-label="Edge"><ui-icon name="edge"></ui-icon></button><button aria-label="Yandex"><ui-icon name="yandex"></ui-icon></button><button aria-label="Mail"><ui-icon name="mail"></ui-icon></button><button aria-label="Zoom"><ui-icon name="zoom"></ui-icon></button><button aria-label="Opera"><ui-icon name="opera"></ui-icon></button><button class="open" aria-label="PDF"><ui-icon name="gpdf"></ui-icon></button><button class="open act" aria-label="OneNote"><ui-icon name="onenote"></ui-icon></button><button class="open" aria-label="Chrome"><ui-icon name="chrome"></ui-icon></button></div>
<div class="tray"><ui-icon name="up"></ui-icon><ui-icon name="batt"></ui-icon><ui-icon name="cloud"></ui-icon><ui-icon name="micw"></ui-icon><ui-icon name="vol"></ui-icon><ui-icon class="pen" name="pen"></ui-icon><span>ENG</span><span class="time"><span>9:59 AM</span><span>4/12/2021</span></span><ui-icon class="n" name="note"></ui-icon></div>`);
define('shared-screen',':host{display:flex;flex-direction:column;height:1028px}','<note-ribbon></note-ribbon><note-body></note-body><win-taskbar></win-taskbar>');

/* ---------- meeting stage ---------- */
define('meeting-stage',`:host{display:flex;flex-direction:column;flex:1;min-width:0;background:#081627;color:#fff;font-size:25px;padding-left:2px}
button{display:flex;align-items:center}
header{display:grid;grid-template-columns:1fr auto 1fr;align-items:center;height:70px;margin-top:18px;padding:0 42px 0 34px}
header>:last-child{justify-self:end}.who{width:34px;height:32px}.t{display:flex;align-items:center;white-space:nowrap;font-weight:300;padding-left:10px}.t i{width:1px;height:28px;background:#5a6674;margin:0 32px}.t ui-icon{width:34px;height:34px;margin-right:22px}.d{width:30px;height:30px}
.talk{align-self:flex-start;height:44px;border-radius:22px;background:#2e2289;margin:16px 0 0 28px;padding:0 26px 3px 12px;gap:14px;font-size:24px;font-weight:500}.talk ui-icon{width:28px;height:28px}
.full{align-self:flex-end;width:49px;height:48px;background:#040b14;margin:16px 0 82px;justify-content:center}.full ui-icon{width:32px;height:32px}
.act{display:flex;flex:1;justify-content:center;align-items:center;gap:42px;padding:128px 0 0 22px}.act button{width:84px;height:84px;border-radius:50%;justify-content:center;background:#2f6fd0;box-shadow:0 4px 10px #000a}.act button+button{background:#081627;border:5px solid #fff}.act ui-icon{width:38px;height:38px}`,
`<header><button aria-label="Users"><ui-icon class="who" name="person"></ui-icon></button><div class="t">Vector Analysis (Lecture, Javanshir Azizov)<i></i><ui-icon name="rec"></ui-icon>86:39</div><button aria-label="Options"><ui-icon class="d" name="dots"></ui-icon></button></header>
<button class="talk"><ui-icon name="mic"></ui-icon>Javanshir Azizov</button><button class="full" aria-label="Full screen"><ui-icon name="full"></ui-icon></button><shared-screen></shared-screen>
<div class="act"><button aria-label="Audio"><ui-icon name="headthin"></ui-icon></button><button aria-label="Camera"><ui-icon name="cam"></ui-icon></button></div>`);
define('meeting-page',':host{display:flex;flex-direction:column;height:100vh;overflow:hidden}main{display:flex;flex:1;min-height:0;font-family:"Noto Sans CJK SC","Noto Sans",sans-serif}',
`<browser-tabs></browser-tabs><browser-bar></browser-bar><bookmark-bar></bookmark-bar><main><user-panel></user-panel><chat-panel></chat-panel><meeting-stage></meeting-stage></main>`);
</script>
</body>
</html>
